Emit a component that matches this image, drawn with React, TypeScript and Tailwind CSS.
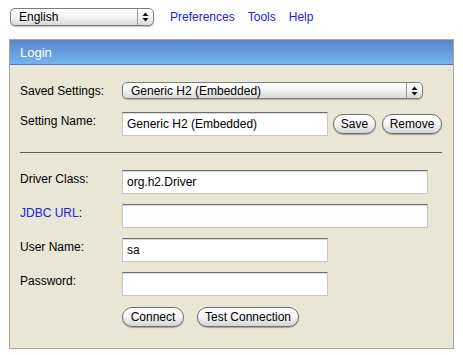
import React from "react";

const font = { fontFamily: '"Liberation Sans", Arial, sans-serif' };

function Arrows() {
  return (
    <svg width="7" height="10" viewBox="0 0 7 10">
      <path d="M3.5 0.5 L6.5 4 L0.5 4 Z" fill="#111" />
      <path d="M3.5 9.5 L6.5 6 L0.5 6 Z" fill="#111" />
    </svg>
  );
}

function AquaSelect({ value, className }: { value: string; className: string }) {
  return (
    <div
      className={`flex items-stretch rounded-[5px] border border-[#7d7d7d] bg-gradient-to-b from-[#ffffff] via-[#f2f2f2] to-[#d9d9d9] shadow-[0_1px_1px_rgba(0,0,0,0.25)] ${className}`}
    >
      <div className="flex flex-1 items-center pl-[8px] text-[12px] leading-none text-black">{value}</div>
      <div className="flex w-[16px] items-center justify-center border-l border-[#9a9a9a]">
        <Arrows />
      </div>
    </div>
  );
}

function AquaButton({ label, className }: { label: string; className: string }) {
  return (
    <div
      className={`flex h-[20px] items-center justify-center rounded-full border border-[#6f6f6f] bg-gradient-to-b from-[#ffffff] via-[#f4f4f4] to-[#d4d4d4] text-[12px] leading-none text-black shadow-[0_1px_1px_rgba(0,0,0,0.3)] ${className}`}
    >
      {label}
    </div>
  );
}

function TextBox({ value, className }: { value?: string; className: string }) {
  return (
    <div
      className={`flex h-[24px] items-center border border-[#c6c6c6] border-t-[#6e6e6e] bg-white pl-[4px] text-[12px] leading-none text-black shadow-[inset_0_1px_0_#d8d8d8] ${className}`}
    >
      {value}
    </div>
  );
}

export default function App() {
  return (
    <div className="h-[355px] w-[463px] bg-white" style={font}>
      <div className="flex items-center pl-[10px] pt-[8px]">
        <AquaSelect value="English" className="h-[18px] w-[144px]" />
        <div className="ml-[16px] flex gap-[13px] text-[12px] leading-none text-[#2020dd]">
          <span>Preferences</span>
          <span>Tools</span>
          <span>Help</span>
        </div>
      </div>

      <div className="ml-[9px] mt-[13px] h-[310px] w-[445px] border border-[#a9a79a] bg-[#e9e6d6]">
        <div className="flex h-[25px] items-center border-b border-[#4b79b8] bg-gradient-to-b from-[#5886cb] to-[#76b2ef] pl-[10px] text-[13px] leading-none text-white">
          Login
        </div>

        <div className="pl-[10px] pt-[17px] text-[12px] leading-[14px] text-black">
          <div className="flex items-center">
            <div className="w-[102px]">Saved Settings:</div>
            <AquaSelect value="Generic H2 (Embedded)" className="h-[17px] w-[301px]" />
          </div>

          <div className="mt-[13px] flex items-start">
            <div className="mt-[2px] w-[102px]">Setting Name:</div>
            <TextBox value="Generic H2 (Embedded)" className="h-[23px] w-[206px]" />
            <AquaButton label="Save" className="ml-[5px] mt-[2px] w-[43px]" />
            <AquaButton label="Remove" className="ml-[6px] mt-[2px] w-[60px]" />
          </div>

          <div className="mt-[16px] h-px w-[422px] bg-[#5e5e5e]" />

          <div className="mt-[17px] flex items-start">
            <div className="mt-[2px] w-[102px]">Driver Class:</div>
            <TextBox value="org.h2.Driver" className="w-[306px]" />
          </div>
          <div className="mt-[10px] flex items-start">
            <div className="mt-[2px] w-[102px]">
              <span className="text-[#2020dd]">JDBC URL</span>:
            </div>
            <TextBox className="w-[306px]" />
          </div>
          <div className="mt-[10px] flex items-start">
            <div className="mt-[2px] w-[102px]">User Name:</div>
            <TextBox value="sa" className="w-[206px]" />
          </div>
          <div className="mt-[10px] flex items-start">
            <div className="mt-[2px] w-[102px]">Password:</div>
            <TextBox className="w-[206px]" />
          </div>
          <div className="mt-[11px] flex pl-[102px]">
            <AquaButton label="Connect" className="w-[62px]" />
            <AquaButton label="Test Connection" className="ml-[13px] w-[102px]" />
          </div>
        </div>
      </div>
    </div>
  );
}
